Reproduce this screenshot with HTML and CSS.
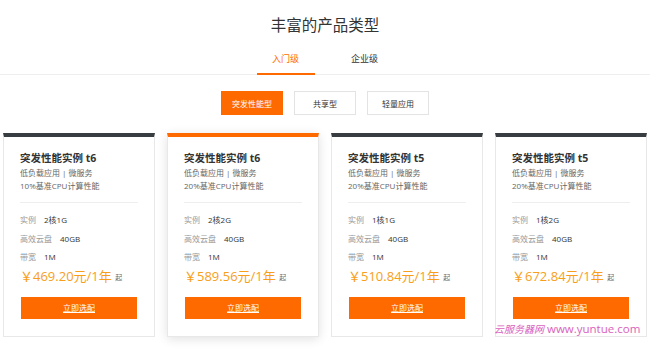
FILE: index.html
```html
<!DOCTYPE html>
<html lang="zh-CN">
<head>
  <meta charset="UTF-8">
  <title>丰富的产品类型</title>
  <link rel="stylesheet" href="styles.css">
</head>
<body>

  <h2 class="title">丰富的产品类型</h2>

  <div class="tabs">
    <a class="tab active">入门级</a>
    <a class="tab">企业级</a>
  </div>

  <div class="filters">
    <button class="filter active">突发性能型</button>
    <button class="filter">共享型</button>
    <button class="filter">轻量应用</button>
  </div>

  <div class="cards">
    <div class="card">
      <h3>突发性能实例 t6</h3>
      <p class="desc">低负载应用 | 微服务<br>10%基准CPU计算性能</p>
      <ul class="specs">
        <li><span>实例</span>2核1G</li>
        <li><span>高效云盘</span>40GB</li>
        <li><span>带宽</span>1M</li>
      </ul>
      <div class="price">￥469.20元/1年 <small>起</small></div>
      <a class="buy">立即选配</a>
    </div>
    <div class="card active">
      <h3>突发性能实例 t6</h3>
      <p class="desc">低负载应用 | 微服务<br>20%基准CPU计算性能</p>
      <ul class="specs">
        <li><span>实例</span>2核2G</li>
        <li><span>高效云盘</span>40GB</li>
        <li><span>带宽</span>1M</li>
      </ul>
      <div class="price">￥589.56元/1年 <small>起</small></div>
      <a class="buy">立即选配</a>
    </div>
    <div class="card">
      <h3>突发性能实例 t5</h3>
      <p class="desc">低负载应用 | 微服务<br>20%基准CPU计算性能</p>
      <ul class="specs">
        <li><span>实例</span>1核1G</li>
        <li><span>高效云盘</span>40GB</li>
        <li><span>带宽</span>1M</li>
      </ul>
      <div class="price">￥510.84元/1年 <small>起</small></div>
      <a class="buy">立即选配</a>
    </div>
    <div class="card">
      <h3>突发性能实例 t5</h3>
      <p class="desc">低负载应用 | 微服务<br>20%基准CPU计算性能</p>
      <ul class="specs">
        <li><span>实例</span>1核2G</li>
        <li><span>高效云盘</span>40GB</li>
        <li><span>带宽</span>1M</li>
      </ul>
      <div class="price">￥672.84元/1年 <small>起</small></div>
      <a class="buy">立即选配</a>
    </div>
  </div>

  <div class="watermark"><em>云服务器网</em> www.yuntue.com</div>

</body>
</html>
```

FILE: styles.css
```css
body {
  margin: 0;
  background: #fff;
  font-family: 'Open Sans', 'Noto Sans CJK SC', sans-serif;
  color: #333;
  position: relative;
  width: 650px;
  height: 349px;
  overflow: hidden;
}

.title {
  margin: 0;
  padding-top: 12px;
  height: 26px;
  line-height: 26px;
  text-align: center;
  font-size: 15.5px;
  font-weight: normal;
  color: #333;
}

.tabs {
  display: flex;
  justify-content: center;
  gap: 21px;
  margin-top: 9px;
  border-bottom: 1px solid #eee;
}

.tab {
  width: 58px;
  height: 26px;
  line-height: 24px;
  text-align: center;
  font-size: 9px;
  color: #333;
  border-bottom: 2px solid transparent;
  margin-bottom: -1px;
}

.tab.active {
  color: #ff6a00;
  border-bottom-color: #ff6a00;
}

.filters {
  display: flex;
  justify-content: center;
  gap: 11px;
  margin-top: 16px;
}

.filter {
  width: 62px;
  height: 24px;
  padding: 0;
  border: 1px solid #e3e3e3;
  background: #fff;
  font-family: inherit;
  font-size: 8px;
  color: #333;
}

.filter.active {
  background: #ff6a00;
  border-color: #ff6a00;
  color: #fff;
}

.cards {
  display: flex;
  gap: 12px;
  padding: 0 3px;
  margin-top: 18px;
}

.card {
  width: 152px;
  box-sizing: border-box;
  border: 1px solid #e8e8e8;
  border-top: 4px solid #373d41;
  padding: 13px 16px 17px 16px;
}

.card.active {
  border-top-color: #ff6a00;
  box-shadow: 0 2px 10px rgba(0,0,0,0.12);
}

.card h3 {
  margin: 0;
  font-size: 10.5px;
  line-height: 16px;
  font-weight: bold;
  color: #333;
}

.desc {
  margin: 0;
  padding-bottom: 10px;
  border-bottom: 1px solid #eee;
  font-size: 8px;
  line-height: 13px;
  color: #666;
}

.specs {
  list-style: none;
  margin: 8px 0 0;
  padding: 0;
  font-size: 8px;
  line-height: 18.5px;
  color: #333;
}

.specs span {
  color: #999;
  margin-right: 8px;
}

.price {
  margin-top: 0;
  height: 18px;
  line-height: 18px;
  font-size: 13px;
  color: #f89e1b;
}

.price small {
  font-size: 7px;
  color: #666;
  vertical-align: top;
  line-height: 22px;
}

.buy {
  display: block;
  margin: 12px 1px 0;
  height: 22px;
  line-height: 22px;
  text-align: center;
  background: #ff6a00;
  color: #fff;
  font-size: 8px;
  text-decoration: underline;
}

.watermark {
  position: absolute;
  left: 494px;
  top: 321px;
  font-size: 11.5px;
  color: #d962bd;
  white-space: nowrap;
}

.watermark em {
  font-size: 10px;
}
```
